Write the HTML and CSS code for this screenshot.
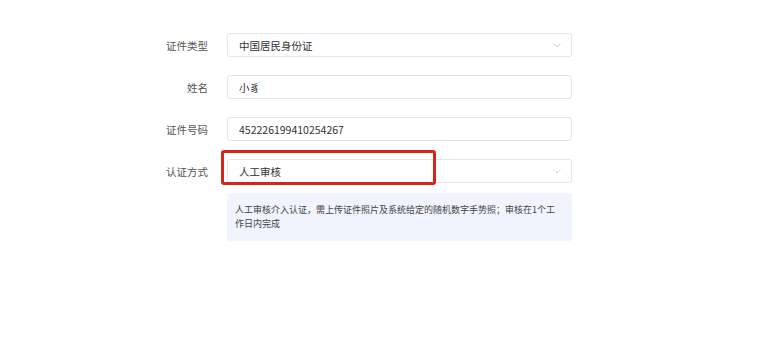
FILE: index.html
```html
<!DOCTYPE html>
<html lang="zh-CN">
<head>
  <meta charset="UTF-8">
  <title>实名认证</title>
  <link rel="stylesheet" href="styles.css">
</head>
<body>
  <div class="form">
    <div class="form-row">
      <label class="form-label">证件类型</label>
      <div class="field select">
        <span>中国居民身份证</span>
        <svg class="chevron" width="8" height="5" viewBox="0 0 8 5"><path d="M0.5 0.5 L4 4 L7.5 0.5" fill="none" stroke="#d0d3d8" stroke-width="1"/></svg>
      </div>
    </div>
    <div class="form-row">
      <label class="form-label">姓名</label>
      <div class="field"><span>小豸</span></div>
    </div>
    <div class="form-row">
      <label class="form-label">证件号码</label>
      <div class="field"><span>452226199410254267</span></div>
    </div>
    <div class="form-row">
      <label class="form-label">认证方式</label>
      <div class="field select">
        <span>人工审核</span>
        <svg class="chevron" width="8" height="5" viewBox="0 0 8 5"><path d="M0.5 0.5 L4 4 L7.5 0.5" fill="none" stroke="#d0d3d8" stroke-width="1"/></svg>
        <div class="highlight"></div>
      </div>
    </div>
    <div class="tip-row">
      <div class="tip">人工审核介入认证，需上传证件照片及系统给定的随机数字手势照；审核在1个工作日内完成</div>
    </div>
  </div>
</body>
</html>
```

FILE: styles.css
```css
body {
  margin: 0;
  background-color: #fff;
  font-family: "Noto Sans CJK SC", "Noto Sans", sans-serif;
  color: #333;
}

.form {
  width: 424px;
  margin-left: 148px;
  padding-top: 33px;
  display: flex;
  flex-direction: column;
  gap: 18px;
}

.form-row {
  display: flex;
  align-items: center;
  gap: 19px;
}

.form-label {
  width: 60px;
  text-align: right;
  font-size: 10.5px;
  color: #555;
}

.field {
  position: relative;
  flex-grow: 1;
  height: 22px;
  border: 1px solid #e6e7ea;
  border-radius: 3px;
  display: flex;
  align-items: center;
  padding: 0 10px 0 11px;
  font-size: 10.5px;
  color: #333;
}

.field span {
  flex-grow: 1;
}

.highlight {
  position: absolute;
  left: -7px;
  top: -10px;
  width: 209px;
  height: 29px;
  border: 3px solid #d4271c;
  border-radius: 3px;
}

.tip-row {
  padding-left: 79px;
  margin-top: -8px;
}

.tip {
  background-color: #f1f3fd;
  border-radius: 3px;
  padding: 10px 16px 10px 8px;
  font-size: 9px;
  line-height: 14px;
  color: #444;
}
```
